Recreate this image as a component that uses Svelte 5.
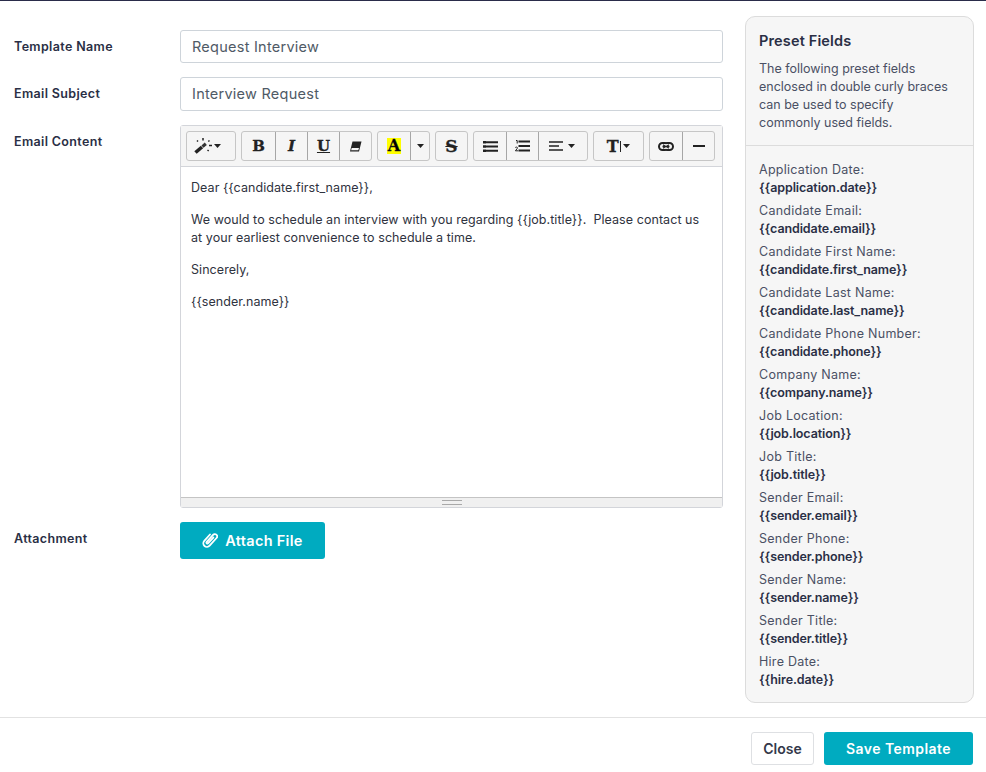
<script>
	const presets = [
		['Application Date:', '{{application.date}}'],
		['Candidate Email:', '{{candidate.email}}'],
		['Candidate First Name:', '{{candidate.first_name}}'],
		['Candidate Last Name:', '{{candidate.last_name}}'],
		['Candidate Phone Number:', '{{candidate.phone}}'],
		['Company Name:', '{{company.name}}'],
		['Job Location:', '{{job.location}}'],
		['Job Title:', '{{job.title}}'],
		['Sender Email:', '{{sender.email}}'],
		['Sender Phone:', '{{sender.phone}}'],
		['Sender Name:', '{{sender.name}}'],
		['Sender Title:', '{{sender.title}}'],
		['Hire Date:', '{{hire.date}}']
	];
</script>

{#snippet caret()}
	<svg class="caret" width="7" height="4" viewBox="0 0 7 4"><path d="M0 0h7L3.500 4z" fill="#222" /></svg>
{/snippet}

<div class="page">
	<main class="body">
		<form class="form">
			<div class="row">
				<span class="label">Template Name</span>
				<div class="input">Request Interview</div>
			</div>
			<div class="row">
				<span class="label second">Email Subject</span>
				<div class="input">Interview Request</div>
			</div>
			<div class="row">
				<span class="label label-content">Email Content</span>
				<div class="editor">
					<div class="toolbar">
						<div class="group">
							<button type="button" class="tool w48 magic">
								<svg width="18" height="16" viewBox="0 0 18 16">
									<path d="M1.500 14.500 8 9" stroke="#222" stroke-width="3.600" />
									<path d="M8.500 8.600 11.800 5.800" stroke="#333" stroke-width="3.200" />
									<path d="M9 0v2.500M3 2.500l1 1M15.500 2.500l-1.200 1M15 7.500h3M13.500 12l1.200 1" stroke="#222" stroke-width="1.500" fill="none" />
								</svg>
								{@render caret()}
							</button>
						</div>
						<div class="group">
							<button type="button" class="tool w33 serif">B</button>
							<button type="button" class="tool w32 serif ital">I</button>
							<button type="button" class="tool w32 serif und">U</button>
							<button type="button" class="tool w32">
								<svg width="13" height="11" viewBox="0 0 13 11">
									<path d="M3.500 0.500h9L10 10.500H1z" fill="#222" />
									<path d="M2.700 7h7.300l-.7 2.300H2.100z" fill="#f5f5f5" />
								</svg>
							</button>
						</div>
						<div class="group">
							<button type="button" class="tool w32 serif"><span class="hilite">A</span></button>
							<button type="button" class="tool w19">{@render caret()}</button>
						</div>
						<div class="group">
							<button type="button" class="tool w31 serif strike">S</button>
						</div>
						<div class="group">
							<button type="button" class="tool w32">
								<svg width="15" height="11" viewBox="0 0 15 11">
									<path d="M0 0h3v2.400H0zM0 4.300h3v2.400H0zM0 8.600h3V11H0z" fill="#222" />
									<path d="M3 1.200h12M3 5.500h12M3 9.800h12" stroke="#222" stroke-width="2" />
								</svg>
							</button>
							<button type="button" class="tool w32">
								<svg width="15" height="12" viewBox="0 0 15 12">
									<path d="M1 0.500h1.200v3M0.300 7.500c1.600-1 2.800 0 1.800 1.200L.4 10.800h2.800" stroke="#222" stroke-width="1" fill="none" />
									<path d="M3.500 1.500H15M3.500 6H15M3.500 10.500H15" stroke="#222" stroke-width="2" />
								</svg>
							</button>
							<button type="button" class="tool w49 align">
								<svg width="14" height="10" viewBox="0 0 14 10">
									<path d="M0 1h14M0 5h10M0 9h14" stroke="#222" stroke-width="1.500" />
								</svg>
								{@render caret()}
							</button>
						</div>
						<div class="group">
							<button type="button" class="tool w49 serif size">T<i class="bar"></i>{@render caret()}</button>
						</div>
						<div class="group">
							<button type="button" class="tool w32">
								<svg width="16" height="9" viewBox="0 0 16 9">
									<rect x="1" y="1" width="9" height="7" rx="3.500" fill="none" stroke="#222" stroke-width="2" />
									<rect x="6" y="1" width="9" height="7" rx="3.500" fill="none" stroke="#222" stroke-width="2" />
									<path d="M4.500 4.500h7" stroke="#222" stroke-width="1.600" />
									<path d="M6 2.600h4M6 6.400h4" stroke="#f5f5f5" stroke-width="1" />
								</svg>
							</button>
							<button type="button" class="tool w32">
								<svg width="12" height="2" viewBox="0 0 12 2"><path d="M0 0h12v2H0z" fill="#222" /></svg>
							</button>
						</div>
					</div>
					<div class="content">
						<p>Dear {'{{'}candidate.first_name{'}}'},</p>
						<p>We would to schedule an interview with you regarding {'{{'}job.title{'}}'}.&nbsp; Please contact us at your earliest convenience to schedule a time.</p>
						<p>Sincerely,</p>
						<p>{'{{'}sender.name{'}}'}</p>
					</div>
					<div class="resize"><i></i></div>
				</div>
			</div>
			<div class="row attach-row">
				<span class="label">Attachment</span>
				<button type="button" class="btn attach">
					<svg width="16" height="18" viewBox="0 0 16 18">
						<g transform="rotate(42 8 9) translate(3.200 -1.200) scale(.9)">
							<path d="M0.500 6v9.500a4 4 0 0 0 8 0V4a2.600 2.600 0 0 0-5.200 0v10.500a1.100 1.100 0 0 0 2.200 0V6" fill="none" stroke="#fff" stroke-width="2" stroke-linecap="round" />
						</g>
					</svg>
					Attach File
				</button>
			</div>
		</form>

		<aside class="side">
			<div class="side-head">
				<h3>Preset Fields</h3>
				<p>The following preset fields enclosed in double curly braces can be used to specify commonly used fields.</p>
			</div>
			<ul class="fields">
				{#each presets as [name, token]}
					<li>{name}<b>{token}</b></li>
				{/each}
			</ul>
		</aside>
	</main>

	<footer class="foot">
		<button type="button" class="btn close">Close</button>
		<button type="button" class="btn save">Save Template</button>
	</footer>
</div>

<style>
	:global(body) {
		margin: 0;
		background: #fff;
	}

	.page {
		width: 986px;
		height: 772px;
		box-sizing: border-box;
		border-top: 1px solid #2a2c4a;
		font-family: Inter, 'Liberation Sans', sans-serif;
		color: #2b3044;
		overflow: hidden;
	}

	.body {
		display: flex;
		gap: 22px;
		height: 716px;
		box-sizing: border-box;
		padding: 15px 12px 0 14px;
	}

	.form {
		width: 709px;
		flex: none;
		display: flex;
		flex-direction: column;
		gap: 14px;
		padding-top: 14px;
	}

	.row {
		display: flex;
	}

	.label {
		width: 166px;
		flex: none;
		font-size: 12.5px;
		font-weight: 600;
		line-height: 33px;
		color: #2a2f45;
		letter-spacing: 0.35px;
	}

	.second {
		line-height: 34px;
	}

	.label-content {
		line-height: 33px;
	}

	.input {
		flex: 1;
		height: 33px;
		box-sizing: border-box;
		border: 1px solid #ced4da;
		border-radius: 3px;
		padding: 0 11px;
		font-size: 14.5px;
		line-height: 31px;
		color: #4f5a66;
		letter-spacing: 0.25px;
	}

	.row + .row .input {
		height: 34px;
		line-height: 32px;
	}

	.editor {
		flex: 1;
		min-width: 0;
		height: 383px;
		box-sizing: border-box;
		border: 1px solid #d3d5da;
		border-radius: 3px;
		display: flex;
		flex-direction: column;
	}

	.toolbar {
		height: 41px;
		box-sizing: border-box;
		flex: none;
		display: flex;
		gap: 5px;
		padding: 5px;
		background: #f5f5f5;
		border-bottom: 1px solid #d3d5da;
	}

	.group {
		display: flex;
		height: 30px;
		border: 1px solid #c6c6c6;
		border-radius: 3px;
		box-sizing: border-box;
	}

	.tool {
		display: flex;
		align-items: center;
		justify-content: center;
		gap: 3px;
		padding: 0;
		border: 0;
		border-left: 1px solid #a6a6a6;
		background: transparent;
		box-sizing: border-box;
		color: #222;
	}

	.tool:first-child {
		border-left: 0;
	}

	.w19 { width: 19px; }
	.w31 { width: 31px; }
	.w32 { width: 32px; }
	.w33 { width: 33px; }
	.w48 { width: 48px; }
	.w49 { width: 49px; }

	.magic {
		padding-right: 7px;
		gap: 2px;
	}

	.align {
		gap: 5px;
		padding-right: 3px;
	}

	.serif {
		font-family: 'DejaVu Serif', 'Liberation Serif', serif;
		font-weight: 700;
		font-size: 15px;
		-webkit-text-stroke: 0.3px #222;
	}

	.ital {
		font-style: italic;
	}

	.und {
		text-decoration: underline;
	}

	.strike {
		text-decoration: line-through;
		font-size: 17px;
	}

	.hilite {
		display: block;
		width: 14px;
		height: 16px;
		line-height: 16px;
		background: #ff0;
		color: #000;
		text-align: center;
		font-size: 16px;
	}

	.size {
		font-size: 16px;
		gap: 2px;
	}

	.bar {
		width: 1.5px;
		height: 11px;
		background: #222;
		margin-left: -1px;
	}

	.caret {
		flex: none;
	}

	.content {
		flex: 1;
		padding: 12px 10px 0;
		font-size: 12.5px;
		line-height: 18px;
		color: #2f3340;
		letter-spacing: 0.06px;
	}

	.content p {
		margin: 0 0 14px;
	}

	.resize {
		height: 10px;
		box-sizing: border-box;
		flex: none;
		background: #f0f0f0;
		border-top: 1px solid #c4c4c4;
		display: flex;
		justify-content: center;
		align-items: center;
	}

	.resize i {
		width: 20px;
		height: 3px;
		border-top: 1px solid #a9a9a9;
		border-bottom: 1px solid #a9a9a9;
	}

	.btn {
		font-family: inherit;
		font-weight: 600;
		border-radius: 3px;
		border: 0;
		padding: 0;
	}

	.attach-row {
		align-items: flex-start;
	}

	.attach-row .label {
		line-height: 34px;
	}

	.attach {
		width: 145px;
		height: 37px;
		display: flex;
		align-items: center;
		justify-content: center;
		gap: 7px;
		background: #00abc0;
		color: #fff;
		font-size: 14.5px;
		letter-spacing: 0.3px;
	}

	.side {
		width: 229px;
		height: 687px;
		box-sizing: border-box;
		background: #f6f6f6;
		border: 1px solid #dcdcdc;
		border-radius: 10px;
		flex: none;
	}

	.side-head {
		height: 129px;
		box-sizing: border-box;
		padding: 15px 13px 0;
		border-bottom: 1px solid #dcdcdc;
	}

	.side h3 {
		margin: 0 0 10px;
		font-size: 14.5px;
		font-weight: 600;
		line-height: 18px;
		letter-spacing: 0.15px;
		color: #2a2f45;
	}

	.side p {
		margin: 0;
		max-width: 195px;
		font-size: 12.5px;
		line-height: 18px;
		color: #4a5064;
	}

	.fields {
		list-style: none;
		margin: 0;
		padding: 15px 13px 0;
		font-size: 12.5px;
		line-height: 18px;
		color: #4a5064;
		letter-spacing: 0.27px;
	}

	.fields li {
		margin-bottom: 5px;
	}

	.fields b {
		display: block;
		font-weight: 600;
		color: #2a2f45;
		letter-spacing: -0.1px;
	}

	.foot {
		height: 55px;
		box-sizing: border-box;
		border-top: 1px solid #e2e2e2;
		display: flex;
		justify-content: flex-end;
		gap: 10px;
		padding: 14px 13px 0 0;
	}

	.close {
		width: 63px;
		height: 33px;
		background: #fff;
		border: 1px solid #dee0e3;
		color: #33384a;
		font-size: 14px;
	}

	.save {
		width: 149px;
		height: 33px;
		background: #00abc0;
		color: #fff;
		font-size: 14px;
		letter-spacing: 0.45px;
	}
</style>
